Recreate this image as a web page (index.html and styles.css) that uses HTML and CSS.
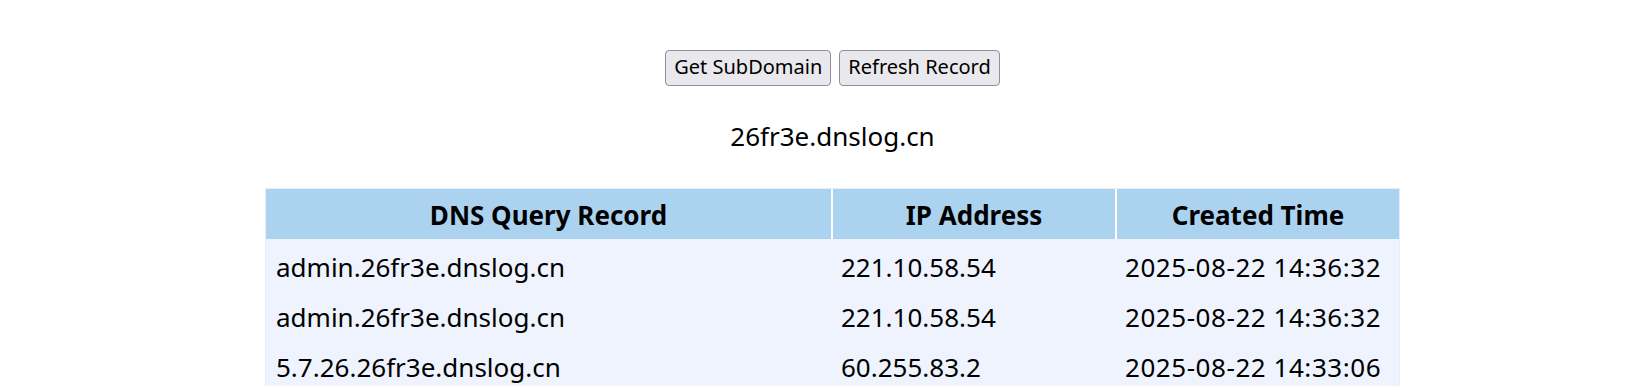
FILE: index.html
```html
<!DOCTYPE html>
<html lang="en">

<head>
    <meta charset="UTF-8">
    <meta name="viewport" content="width=device-width, initial-scale=1.0">
    <title>DNSLog</title>
    <link rel="stylesheet" href="styles.css">
</head>

<body>
    <div class="container">
        <div class="actions">
            <button onclick="getDomain()">Get SubDomain</button>
            <button onclick="getRecord()">Refresh Record</button>
        </div>

        <p id="domain" class="domain">26fr3e.dnslog.cn</p>

        <table class="records">
            <colgroup>
                <col class="col-query">
                <col class="col-ip">
                <col class="col-time">
            </colgroup>
            <thead>
                <tr>
                    <th>DNS Query Record</th>
                    <th>IP Address</th>
                    <th>Created Time</th>
                </tr>
            </thead>
            <tbody id="record-list">
                <tr>
                    <td>admin.26fr3e.dnslog.cn</td>
                    <td>221.10.58.54</td>
                    <td class="time">2025-08-22 14:36:32</td>
                </tr>
                <tr>
                    <td>admin.26fr3e.dnslog.cn</td>
                    <td>221.10.58.54</td>
                    <td class="time">2025-08-22 14:36:32</td>
                </tr>
                <tr>
                    <td>5.7.26.26fr3e.dnslog.cn</td>
                    <td>60.255.83.2</td>
                    <td class="time">2025-08-22 14:33:06</td>
                </tr>
            </tbody>
        </table>
    </div>
    <script>
        function getDomain() {
            // subdomain is fetched from the server in the real page
        }
        function getRecord() {
            // records are fetched from the server in the real page
        }
    </script>
</body>

</html>
```

FILE: styles.css
```css
* {
    box-sizing: border-box;
    margin: 0;
    padding: 0;
}

body {
    font-family: "Noto Sans", sans-serif;
    color: #000;
    background: #fff;
}

.container {
    padding: 50px 0 0 27px;
    display: flex;
    flex-direction: column;
    align-items: center;
}

.actions {
    display: flex;
    gap: 8px;
}

button {
    font-family: "Noto Sans", sans-serif;
    font-size: 20px;
    line-height: 26px;
    padding: 3px 8px 5px;
    color: #000;
    background: #e9e9ed;
    border: 1px solid #8f8f9d;
    border-radius: 4px;
    cursor: pointer;
}

.domain {
    font-size: 26px;
    line-height: 36px;
    margin-top: 32px;
}

.records {
    margin-top: 34px;
    width: 1135px;
    table-layout: fixed;
    border-collapse: separate;
    border-spacing: 0;
    border: 1px solid #e4edf9;
    background: #eef3fd;
    font-size: 26px;
}

.col-query {
    width: 565px;
}

.col-ip,
.col-time {
    width: 284px;
}

.records th {
    background: #abd3ef;
    font-weight: 700;
    text-align: center;
    height: 50px;
    line-height: 36px;
    padding: 8px 10px 6px;
}

.records th+th {
    border-left: 2px solid #fff;
}

.records td {
    height: 50px;
    line-height: 36px;
    padding: 10px 10px 4px;
    text-align: left;
    white-space: nowrap;
}

.records td.time {
    letter-spacing: 0.55px;
}
```
